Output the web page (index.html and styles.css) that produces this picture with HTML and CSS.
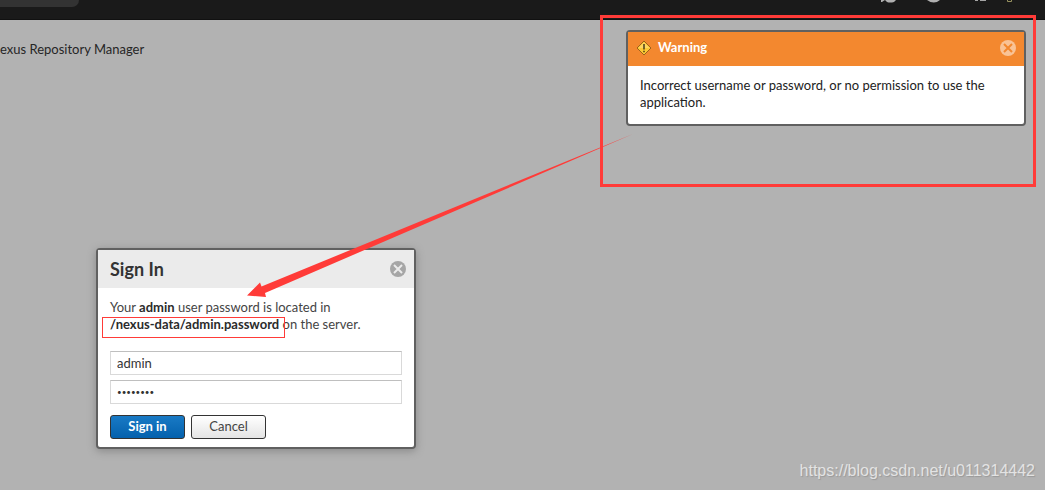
FILE: index.html
```html
<!DOCTYPE html>
<html lang="en">
<head>
<meta charset="utf-8">
<title>Nexus Repository Manager</title>
<link rel="stylesheet" href="styles.css">
</head>
<body>
<header class="topbar">
  <div class="topbar-search"></div>
  <svg class="topbar-icons" width="140" height="4" viewBox="0 0 140 4" aria-hidden="true">
    <path d="M1 0h4l-3 2H1zM5 0h11l-2 2q-4 1-7 0z" fill="#b0b0b0"/>
    <path d="M47 0h13q-6 5-13 0z" fill="#b0b0b0"/>
    <path d="M95 0h3v1h-3zM100 0h6v1h-6z" fill="#a5a5a5"/>
    <path d="M127.500 0v1.500h4V0" fill="none" stroke="#96915f"/>
  </svg>
</header>
<main class="page">
  <p class="page-title">exus Repository Manager</p>
</main>

<section class="window toast" role="alert">
  <div class="window-head toast-head">
    <svg class="warn-icon" width="16" height="16" viewBox="0 0 16 16" aria-hidden="true">
      <path d="M8 1l7 7-7 7-7-7z" fill="#fcc935" stroke="#9c611b"/>
      <path d="M8 2.500L13.500 8H2.500z" fill="#ffe083" opacity=".6"/>
      <path d="M8 4v5.500M8 10.700v1.500" stroke="#3d3410" stroke-width="1.400"/>
    </svg>
    <h2 class="toast-title">Warning</h2>
    <button class="close close-light" type="button" aria-label="Close warning">
      <svg width="16" height="16" viewBox="0 0 16 16"><circle class="close-disc" cx="8" cy="8" r="8"/><path class="close-cross" d="M4 4l8 8M12 4l-8 8"/></svg>
    </button>
  </div>
  <p class="toast-text">Incorrect username or password, or no permission to use the application.</p>
</section>

<form class="window dialog">
  <div class="window-head dialog-head">
    <h1 class="dialog-title">Sign In</h1>
    <button class="close" type="button" aria-label="Close sign in">
      <svg width="16" height="16" viewBox="0 0 16 16"><circle class="close-disc" cx="8" cy="8" r="8"/><path class="close-cross" d="M4 4l8 8M12 4l-8 8"/></svg>
    </button>
  </div>
  <div class="dialog-body">
    <p class="hint">Your <b>admin</b> user password is located in<br><b>/nexus-data/admin.password</b> on the server.</p>
    <div class="fields">
      <input class="field" type="text" value="admin" aria-label="Username">
      <input class="field field-password" type="password" value="admin123" aria-label="Password">
    </div>
    <div class="actions">
      <button class="btn btn-primary" type="button">Sign in</button>
      <button class="btn" type="button">Cancel</button>
    </div>
  </div>
</form>

<div class="mark mark-toast"></div>
<div class="mark mark-path"></div>
<svg class="arrow" width="386" height="164" viewBox="0 0 386 164" aria-hidden="true">
  <path d="M0 161.500L13 148.500L14.500 152.500L386 0L18 159L19 163Z" fill="#ff3b38"/>
</svg>
<p class="watermark">https://blog.csdn.net/u011314442</p>
</body>
</html>
```
FILE: styles.css
```css
* { box-sizing: border-box; }
body {
  margin: 0;
  min-height: 100vh;
  background: #b2b2b2;
  color: #333;
  font: 13px/17px Lato, "Open Sans", sans-serif;
  overflow: hidden;
}
p, h1, h2 { margin: 0; }

.topbar {
  display: flex;
  justify-content: space-between;
  align-items: flex-start;
  height: 20px;
  padding-right: 25px;
  background: #1a1a1a;
  border-bottom: 1px solid #111;
}
.topbar-search {
  width: 79px;
  height: 7px;
  background: #333;
  border-radius: 0 0 8px 0;
}
.page { padding-top: 21px; }
.page-title { color: #262626; }

.window {
  position: absolute;
  background: #fff;
  border: 2px solid #606060;
  border-radius: 4px;
}
.window-head { display: flex; align-items: center; }

.toast { top: 30px; right: 19px; width: 400px; }
.toast-head { height: 34px; padding: 0 8px; gap: 6px; background: #f3882f; }
.warn-icon { margin-bottom: 2px; }
.toast-title { flex: 1; padding-bottom: 4px; color: #fff; font-size: 13px; line-height: 17px; }
.toast-text { padding: 11px 12px 13px; color: #222; }

.close {
  display: block;
  margin-bottom: 2px;
  padding: 0;
  border: 0;
  background: none;
}
.close svg { display: block; }
.close-disc { fill: #a6a6a6; }
.close-cross { stroke: #ebebeb; stroke-width: 2; }
.close-light .close-disc { fill: #f9c396; }
.close-light .close-cross { stroke: #f3882f; }

.dialog { top: 248px; left: 96px; width: 320px; box-shadow: 0 2px 8px #888; }
.dialog-head { height: 38px; padding: 0 8px 0 12px; justify-content: space-between; background: #ebebeb; }
.dialog-head .close { margin-bottom: 0; }
.dialog-title { font-size: 18px; line-height: 20px; color: #333; }
.dialog-body { padding: 11px 12px 8px; }
.hint { color: #444; }
.hint b { color: #2b2b2b; }
.fields { display: grid; gap: 5px; margin-top: 18px; }
.field {
  width: 100%;
  height: 24px;
  padding: 0 6px;
  border: 1px solid #d9d9d9;
  border-top-color: #bfbfbf;
  background: #fff;
  color: #333;
  font: inherit;
}
.field-password { font-size: 8px; }
.actions { display: flex; gap: 6px; margin-top: 11px; }
.btn {
  width: 75px;
  height: 24px;
  padding: 0 0 1px;
  border: 1px solid #333;
  border-radius: 3px;
  background: linear-gradient(#fff, #e4e4e4);
  color: #444;
  font: inherit;
}
.btn-primary { background: linear-gradient(#197ac5, #0461ad); color: #fff; font-weight: 700; }

.mark { position: absolute; border: 1px solid #ff3b38; }
.mark-toast { top: 15px; right: 9px; width: 436px; height: 172px; border-width: 3px; }
.mark-path { top: 317px; left: 102px; width: 183px; height: 21px; }
.arrow { position: absolute; top: 134px; left: 247px; }
.watermark {
  position: absolute;
  right: 10px;
  bottom: 9px;
  color: #e3e3e3;
  font: 16px/20px "Liberation Sans", Arial, sans-serif;
  text-shadow: 1px 1px 1px #999;
}
```
